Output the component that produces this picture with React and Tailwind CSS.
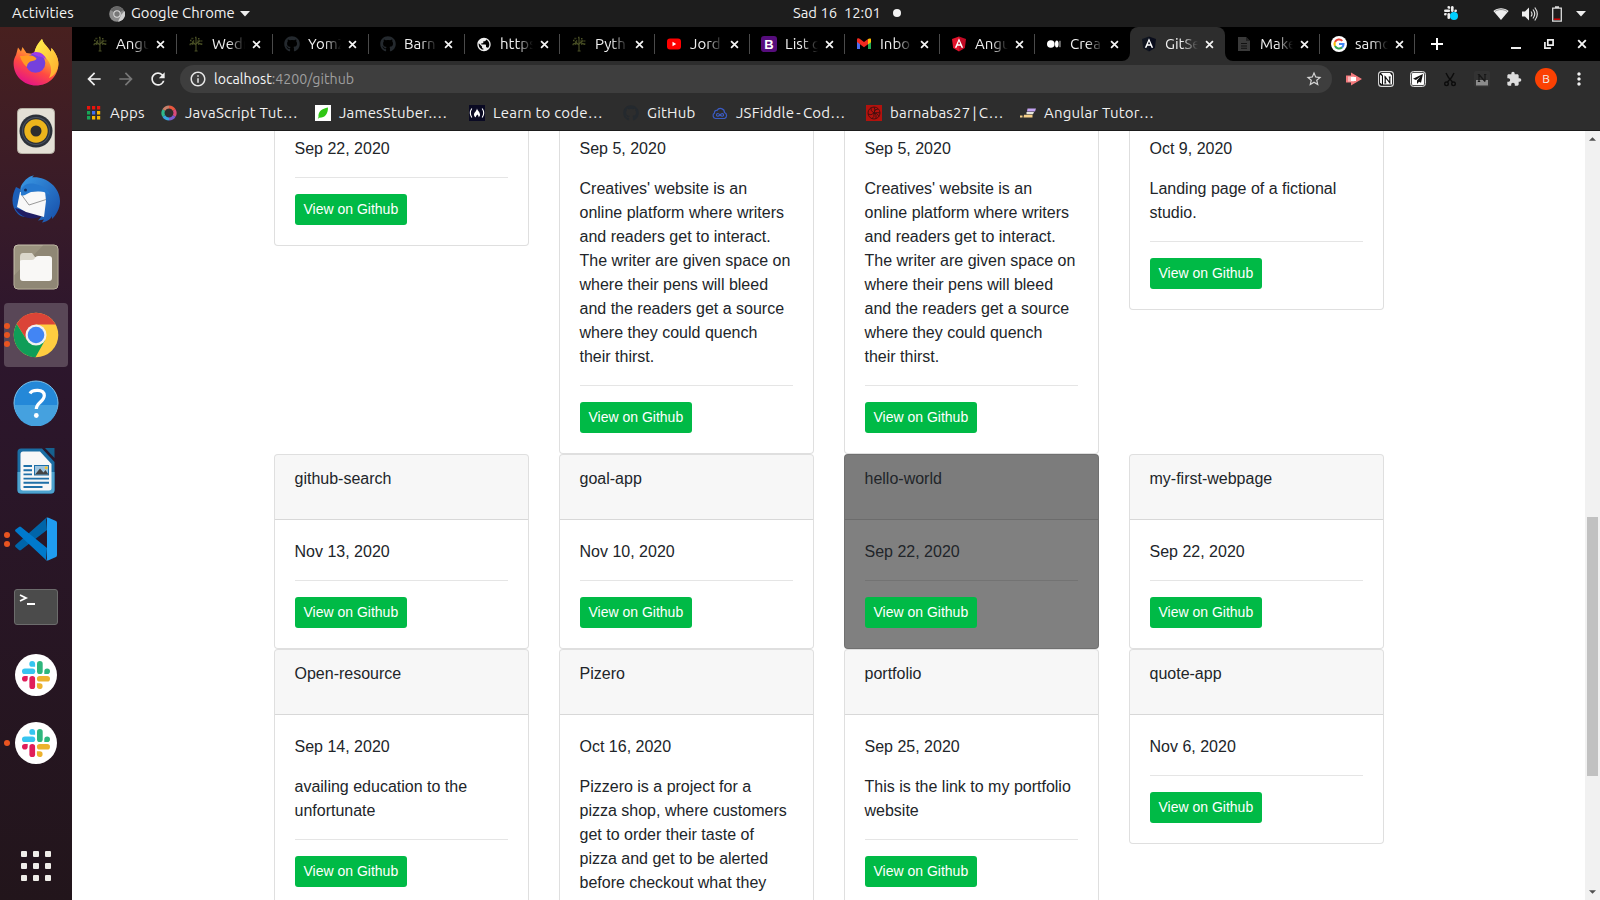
import React from "react";
import { FaGithub } from "react-icons/fa";
import {
  MdArrowBack,
  MdArrowForward,
  MdRefresh,
  MdInfoOutline,
  MdStarBorder,
  MdExtension,
  MdMoreVert,
  MdPublic,
} from "react-icons/md";

const UI = "font-['Ubuntu','Noto_Sans',sans-serif]";

/* ---------- small shared glyphs ---------- */

function Cross({ className = "" }) {
  return (
    <svg viewBox="0 0 10 10" className={className} fill="none" stroke="#f5f5f5" strokeWidth="1.9">
      <path d="M1.2 1.2 8.8 8.8M8.8 1.2 1.2 8.8" />
    </svg>
  );
}

function Tree() {
  return (
    <svg viewBox="0 0 16 16" className="size-4" fill="none" stroke="#4b5126" strokeWidth="1.1">
      <path d="M8 15V7M6.6 15h3M8 9 4 5.5M8 8l4-3.5M8 7V2M5.5 7 2 8M10.5 7l3.5 1.5" />
      <path
        d="M2 4.5h2M3.5 2.5h2M7 1.5h2M10 2.8h2M12.5 5h2M1.5 8.5h2M5 5h1.5M9.5 5h1.5M12.5 8h2M4 8h2M10 8h2"
        strokeWidth="1.5"
        strokeDasharray="1.2 .5"
      />
    </svg>
  );
}

function Shield({ left, right }) {
  return (
    <svg viewBox="0 0 16 16" className="size-4">
      <path d="M8 .5 1 3l1.1 9L8 15.5Z" fill={left} />
      <path d="M8 .5 15 3l-1.1 9L8 15.5Z" fill={right} />
      <path d="M8 2.2 3.8 11.8h1.7l.9-2.1h3.3l.8 2.1h1.7Zm0 3.1 1.2 3H6.9Z" fill="#fff" />
    </svg>
  );
}

function YouTube() {
  return (
    <svg viewBox="0 0 16 16" className="size-4">
      <rect x="1" y="2.5" width="14" height="11" rx="3" fill="#f00" />
      <path d="M6.5 5.7v4.6L10.2 8Z" fill="#fff" />
    </svg>
  );
}

function Bootstrap() {
  return (
    <span className="flex size-4 items-center justify-center rounded-[3px] bg-[#560d7c] font-['Liberation_Sans',sans-serif] text-[13px] leading-none font-bold text-white">
      B
    </span>
  );
}

function Gmail() {
  return (
    <svg viewBox="0 0 16 16" className="size-4">
      <path d="M1 5v8h3V7Z" fill="#4a6cf0" />
      <path d="M15 5v8h-3V7Z" fill="#20a853" />
      <path d="M12 4.4 15 2.6V6l-3 2.2Z" fill="#fbbc05" />
      <path d="M1 6V3.6C1 2 2.8 1.8 4 3l4 3 4-3v5.2l-4 3-4-3Z" fill="#f02a20" />
      <path d="M12 3c1.2-1 3-.8 3 .7V6l-3 2.2Z" fill="#fbbc05" />
    </svg>
  );
}

function Medium() {
  return (
    <svg viewBox="0 0 16 16" className="size-4" fill="#fff">
      <circle cx="4.8" cy="8" r="3.8" />
      <ellipse cx="10.8" cy="8" rx="1.8" ry="3.5" />
      <rect x="13.4" y="4.8" width="1.1" height="6.4" fill="#bbb" />
    </svg>
  );
}

function Sheet() {
  return (
    <svg viewBox="0 0 16 16" className="size-4">
      <path d="M2 1h8l4 4v10H2Z" fill="#3a3a3a" />
      <path d="M10 1v4h4" fill="#222" />
      <path d="M5 7.5h6M5 10h6M5 12.2h6" stroke="#111" strokeWidth="1.1" />
    </svg>
  );
}

function Google() {
  return (
    <svg viewBox="0 0 16 16" className="size-4" fill="none" strokeWidth="2.1">
      <circle cx="8" cy="8" r="8" fill="#fff" />
      <path d="M11.3 4.9A4.5 4.5 0 0 0 4 6" stroke="#ea4335" />
      <path d="M4 6a4.5 4.5 0 0 0 0 4.1" stroke="#fbbc05" />
      <path d="M4 10.1a4.5 4.5 0 0 0 7 1.3" stroke="#34a853" />
      <path d="M8 8h4.5a4.5 4.5 0 0 1-1.4 3.4" stroke="#4285f4" />
    </svg>
  );
}

/* ---------- desktop top bar ---------- */

function SlackMark({ className, mono }) {
  const c = mono ? ["#eee", "#eee", "#eee", "#eee"] : ["#36c5f0", "#2eb67d", "#ecb22e", "#e01e5a"];
  return (
    <svg viewBox="0 0 28 28" className={className}>
      <path d="M10.2 0a2.9 2.9 0 0 1 2.9 2.9v2.9h-2.9a2.9 2.9 0 0 1 0-5.8Z" fill={c[0]} />
      <rect x="0" y="7.4" width="13.2" height="5.7" rx="2.85" fill={c[0]} />
      <rect x="15" y="0" width="5.7" height="13.1" rx="2.85" fill={c[1]} />
      <path d="M22.3 13.1v-2.9a2.85 2.85 0 1 1 2.9 2.9Z" fill={c[1]} />
      <rect x="14.9" y="14.9" width="13.1" height="5.7" rx="2.85" fill={c[2]} />
      <path d="M14.9 22.3h2.9a2.85 2.85 0 1 1-2.9 2.9Z" fill={c[2]} />
      <rect x="7.4" y="14.9" width="5.7" height="13.1" rx="2.85" fill={c[3]} />
      <path d="M5.7 14.9v2.9a2.85 2.85 0 1 1-2.9-2.9Z" fill={c[3]} />
    </svg>
  );
}

function TopBar() {
  return (
    <header
      className={`${UI} grid h-[27px] shrink-0 grid-cols-[793px_1fr_auto] items-center bg-[#1d1d1d] text-[14.8px] leading-none text-[#f2f2f2]`}
    >
      <div className="flex items-center pl-3">
        <span className="w-[97px] tracking-[0.12px]">Activities</span>
        <svg viewBox="0 0 16 16" className="size-4">
          <circle cx="8" cy="8" r="7.8" fill="#8b8b8b" />
          <path d="M8 8 1.5 4A7.8 7.8 0 0 1 14.6 4Z" fill="#666" />
          <path d="M9 15.7 12 9l3.6-4A7.8 7.8 0 0 1 9 15.7Z" fill="#d0d0d0" />
          <circle cx="8" cy="8" r="3.7" fill="#ddd" />
          <circle cx="8" cy="8" r="2.7" fill="#777" />
        </svg>
        <span className="ml-1.5 w-[104px] whitespace-nowrap">Google Chrome</span>
        <svg viewBox="0 0 10 6" className="ml-[5px] h-[6px] w-[10px]" fill="#eee">
          <path d="M0 0h10L5 5.6Z" />
        </svg>
      </div>
      <div className="flex items-center">
        <span className="w-[100px] whitespace-pre">Sad 16  12:01</span>
        <span className="size-2 rounded-full bg-[#f2f2f2]" />
      </div>
      <div className="flex items-center pr-[14px]">
        <span className="relative mr-[34px] block size-[15px]">
          <SlackMark className="size-[13px]" mono />
          <span className="absolute top-[6px] left-[6px] size-2 rounded-full bg-[#00cfff]" />
        </span>
        <svg viewBox="0 0 16 14" className="mr-[13px] h-[14px] w-4">
          <path d="M8 13 .4 4C4.8 .2 11.2 .2 15.6 4Z" fill="#eee" />
          <path d="M2 4.4C5.5 2 10.5 2 14 4.4" stroke="#777" fill="none" strokeWidth=".8" />
        </svg>
        <svg viewBox="0 0 16 16" className="mr-[14px] size-4" fill="none" stroke="#ddd" strokeWidth="1.2">
          <path d="M0 5.500h3L7 1.500v13l-4-4H0Z" fill="#eee" stroke="none" />
          <path d="M9 5.500q2 2.500 0 5M11 3.500q3.400 4.500 0 9M12.800 1.500q5 6.500 0 13" />
        </svg>
        <svg viewBox="0 0 10 16" className="mr-[14px] h-4 w-[10px]" fill="none">
          <path d="M3 1h4M.7 2.200h8.600v13H.7Z" stroke="#ddd" strokeWidth="1.3" />
          <path d="M2 13.200h6" stroke="#d00" strokeWidth="1.4" />
        </svg>
        <svg viewBox="0 0 10 6" className="h-[6px] w-[10px]" fill="#eee">
          <path d="M0 0h10L5 5.600Z" />
        </svg>
      </div>
    </header>
  );
}

/* ---------- dock ---------- */

function Firefox() {
  return (
    <svg viewBox="0 0 46 48" className="-mt-[2px] h-[48px] w-[46px]">
      <defs>
        <linearGradient id="ff" x1=".8" y1="0" x2=".3" y2="1">
          <stop offset="0" stopColor="#fff44f" />
          <stop offset=".35" stopColor="#ffa930" />
          <stop offset=".65" stopColor="#ff4a42" />
          <stop offset="1" stopColor="#e3108b" />
        </linearGradient>
        <linearGradient id="ffy" x1="0" y1="0" x2="1" y2="1">
          <stop offset="0" stopColor="#fff44f" />
          <stop offset="1" stopColor="#ffa92c" />
        </linearGradient>
      </defs>
      <path
        d="M3 17 5 9.500l3 4L9.500 9l4 6 7.500 1c1-6 4-11 8-15 1 4 4 6 6 9l3 4 .5-4C43 15 45.500 21 45.400 26 45 39 35 47.500 23 47.500S.6 38 .6 25.500C.6 22 1.500 19.500 3 17Z"
        fill="url(#ff)"
      />
      <path
        d="M29 1c1 4 4 6 6 9l3 4 .5-4C43 15 45.500 21 45.400 26c-.2 6-4 12-9.400 14 4-7 2-15-3-20-4-4-9-4-12-4 1-6 4-11 8-15Z"
        fill="url(#ffy)"
      />
      <circle cx="22.5" cy="25" r="9.8" fill="#7540dd" />
      <path d="M18 15.500c6-4 14 0 15.500 6.500-3-3.500-6-3-8-3.500Z" fill="#a13ce8" />
      <path d="M7 18c5 0 9-1 13 0 2 .8 3.500 2 3.500 2.800-1 2.200-5 2.200-7 3.200-2 1.500-2.500 3-2.500 5-3-2-6-7-7-11Z" fill="#ff9a24" />
    </svg>
  );
}

function Rhythmbox() {
  return (
    <svg viewBox="0 0 38 46" className="h-[46px] w-[38px]">
      <rect x=".5" y=".5" width="37" height="45" rx="4" fill="#e4e0d6" stroke="#b5b0a5" />
      <circle cx="19" cy="23" r="16.5" fill="#2c3139" />
      <circle cx="19" cy="23" r="14" fill="#4a5260" />
      <circle cx="19" cy="23" r="13" fill="#2c3139" />
      <circle cx="19" cy="23" r="11.7" fill="#edb51c" />
      <circle cx="19" cy="23" r="5.5" fill="#2e2e2e" />
    </svg>
  );
}

function Thunderbird() {
  return (
    <svg viewBox="0 0 48 48" className="size-12">
      <defs>
        <linearGradient id="tb" x1="0" y1="0" x2="1" y2="1">
          <stop offset="0" stopColor="#3a9ae6" />
          <stop offset="1" stopColor="#164da8" />
        </linearGradient>
      </defs>
      <path d="M4 12C-1 22-1 32 6 39c2 2 5 3 8 3L8 14Z" fill="#1c5fb9" />
      <path
        d="M9 11C13 4 18 .5 22 .5l-2 1.800C34 1 48 12 48 26c0 8-4 14-8 18l0-3c-2 4-6 6-10 6.500l2-3-6 1C36 36 34 20 25 17c-5-1.500-10 0-16 4-1-4-1-7 0-10Z"
        fill="url(#tb)"
      />
      <path d="m3 33 10 3 17 5c-9 5-22 2-27-8Z" fill="#201d63" />
      <path d="M8 17 33 16l1 10-2 16-18-5-9-5Z" fill="#f8f8f8" />
      <path d="m9 19 8 11 17-5.500" fill="none" stroke="#999" strokeWidth="1" />
      <path d="M9 20c-1-8 5-13 14-11 8 2 13 5 15 11-7-5-14-4-19-3-4 1-6 5-10 3Z" fill="#2679cf" />
      <circle cx="13.5" cy="15" r="1.5" fill="#153263" />
    </svg>
  );
}

function Files() {
  return (
    <svg viewBox="0 0 46 46" className="size-[46px]">
      <rect x="1" y="1" width="44" height="44" rx="4" fill="#9b937f" stroke="#c8c1ad" />
      <path d="M30 1.500h11q3.500 0 3.500 3.500v36q0 3.500-3.500 3.500H5q-3.500 0-3.500-3.500V31Z" fill="#8f8775" />
      <path d="M7 13q0-4 3-4h9l3 4h14q3 0 3 3v4H7Z" fill="#dbd7cb" />
      <path d="M7 17q0-1 3-1h9q2 0 3-2 1-2 3-2h11q3 0 3 3v19q0 3-3 3H10q-3 0-3-3Z" fill="#f9f8f6" />
    </svg>
  );
}

function Chrome() {
  return (
    <svg viewBox="0 0 46 46" className="size-[46px]">
      <circle cx="23" cy="23" r="22.3" fill="#ffcd40" />
      <path d="M23 12.500 13.900 28.250 3.700 11.900A22.300 22.300 0 0 1 23 .7a22.300 22.300 0 0 1 19.700 11.800Z" fill="#db4437" />
      <path d="M3.700 11.900 13.900 28.250 32 28.250 22.500 45.300A22.300 22.300 0 0 1 3.700 11.900Z" fill="#0f9d58" />
      <circle cx="23" cy="23" r="10.5" fill="#f1f1f1" />
      <circle cx="23" cy="23" r="8.3" fill="#4285f4" />
    </svg>
  );
}

function Help() {
  return (
    <svg viewBox="0 0 46 46" className="size-[46px]">
      <circle cx="23" cy="23" r="22" fill="#2488d8" stroke="#7cc4ee" />
      <path d="M1.500 25h43a21.500 21.500 0 0 1-43 0Z" fill="#45a1df" />
      <path d="M17 13.500c2-4 14-5 14.300 2 0 6-8 7-8 13.500" fill="none" stroke="#fff" strokeWidth="3.2" />
      <circle cx="23.3" cy="35.5" r="2.4" fill="#fff" />
    </svg>
  );
}

function Writer() {
  return (
    <svg viewBox="0 0 38 46" className="h-[46px] w-[38px]">
      <path d="M4 .5h21L37.500 14v28q0 3.500-3.500 3.500H4Q.5 45.500.5 42V4Q.5.5 4 .5Z" fill="#1a6da3" />
      <path d="M.5 24h37v18q0 3.500-3.500 3.500H4Q.5 45.500.5 42Z" fill="#4da3cf" />
      <path d="M6 3.500h17L34.500 16v24q0 2.500-2.500 2.500H6q-2.500 0-2.500-2.500V6Q3.500 3.500 6 3.500Z" fill="#f7f7f7" />
      <path d="M28 0h9.500v10Z" fill="#16618f" />
      <path d="M6.500 18h8.500M6.500 22.200h8.500M6.500 26.400h8.500M6.500 30.600H32M6.500 34.800H32M6.500 39h19" stroke="#1f70a8" strokeWidth="1.9" />
      <rect x="17.5" y="17.5" width="14" height="9.5" fill="#9ec4de" stroke="#1f70a8" />
      <path d="m18 26.500 5-6 3.500 4 2-2.500 3 4.500Z" fill="#444" />
      <circle cx="29.2" cy="19.8" r="1.5" fill="#f2c230" />
    </svg>
  );
}

function VSCode() {
  return (
    <svg viewBox="0 0 44 44" className="size-11">
      <path d="M32 1 1.500 28q-1 1 0 2l3.500 3q1 .8 2 0L33 13Z" fill="#0065a9" />
      <path d="M32 43 1.500 14.500q-1-1 0-2L5 10q1-.8 2 0l26 21Z" fill="#007acc" />
      <path d="M32 1q1-1 2.500-.2L42 4q1 .5 1 2v32q0 1.500-1 2l-7.500 3.300q-1.500.7-2.500-.3 1 .3 1-2V3q0-2.300-1-2Z" fill="#1f9cf0" />
    </svg>
  );
}

function Terminal() {
  return (
    <div className="flex h-[36px] w-[44px] rounded-[3px] border border-[#6c6c6c] bg-[#4b4b4b]">
      <svg viewBox="0 0 42 34" className="w-full" fill="none" stroke="#fff" strokeWidth="1.8">
        <path d="m5 5 6 3-6 3M12 14h8" />
      </svg>
    </div>
  );
}

function Slack() {
  return (
    <div className="flex size-[42px] items-center justify-center rounded-full bg-white">
      <SlackMark className="size-7" />
    </div>
  );
}

const dock = [
  { icon: Firefox, dots: [] },
  { icon: Rhythmbox, dots: [] },
  { icon: Thunderbird, dots: [] },
  { icon: Files, dots: [] },
  { icon: Chrome, dots: [1, 2, 3], active: true },
  { icon: Help, dots: [] },
  { icon: Writer, dots: [] },
  { icon: VSCode, dots: [1, 2] },
  { icon: Terminal, dots: [] },
  { icon: Slack, dots: [] },
  { icon: Slack, dots: [1] },
];

function Dock() {
  return (
    <aside className="flex w-[72px] shrink-0 flex-col bg-linear-to-b from-[#48201f] via-[#2d162d] via-35% to-[#22151b] pt-0.5">
      {dock.map(({ icon: Icon, dots, active }, i) => (
        <div key={i} className="relative flex h-[68px] items-center justify-center px-1">
          <div
            className={
              active
                ? "flex size-16 items-center justify-center rounded-[4px] bg-[#594757]"
                : "flex size-16 items-center justify-center"
            }
          >
            <Icon />
          </div>
          <div className="absolute inset-y-0 left-1 flex flex-col justify-center gap-[3px]">
            {dots.map((d) => (
              <span key={d} className="size-[6px] rounded-full bg-[#e95420]" />
            ))}
          </div>
        </div>
      ))}
      <div className="mx-auto mt-auto mb-[19px] grid grid-cols-3 gap-1.5">
        {Array.from({ length: 9 }, (_, i) => (
          <span key={i} className="size-[6px] rounded-[1px] bg-[#f0eee9]" />
        ))}
      </div>
    </aside>
  );
}

/* ---------- browser chrome ---------- */

const tabs = [
  { title: "Angu", icon: <Tree />, wide: true, sep: true },
  { title: "Wedn", icon: <Tree />, wide: true, sep: true },
  { title: "YomZ", icon: <FaGithub className="size-4 text-[#24292e]" />, wide: true, sep: true },
  { title: "Barn", icon: <FaGithub className="size-4 text-[#24292e]" />, wide: true, sep: true },
  { title: "https", icon: <MdPublic className="size-[17px] text-[#eee]" />, sep: true },
  { title: "Pyth", icon: <Tree />, sep: true },
  { title: "Jord", icon: <YouTube />, sep: true },
  { title: "List g", icon: <Bootstrap />, sep: true },
  { title: "Inbo", icon: <Gmail />, sep: true },
  { title: "Angu", icon: <Shield left="#e3132c" right="#c10a25" />, sep: true },
  { title: "Crea", icon: <Medium /> },
  { title: "GitSe", icon: <Shield left="#101520" right="#0a0d1c" />, active: true },
  { title: "Make", icon: <Sheet />, sep: true },
  { title: "samo", icon: <Google />, sep: true },
];

function Flare({ flip }) {
  return (
    <svg
      viewBox="0 0 8 8"
      className={flip ? "absolute -right-2 bottom-0 size-2 -scale-x-100" : "absolute bottom-0 -left-2 size-2"}
      fill="#2d2d2d"
    >
      <path d="M8 0v8H0A8 8 0 0 0 8 0Z" />
    </svg>
  );
}

function Tab({ title, icon, wide, sep, active }) {
  return (
    <div
      className={`relative flex h-[34px] shrink-0 items-center ${wide ? "w-24" : "w-[95px]"} ${
        active ? "rounded-t-lg bg-[#2d2d2d]" : ""
      }`}
    >
      {active && <Flare />}
      {active && <Flare flip />}
      <span className="ml-[11px] flex w-4 shrink-0 justify-center">{icon}</span>
      <span className="ml-2 w-[33px] shrink-0 overflow-hidden mask-r-from-50% mask-r-to-100% text-[15px] leading-5 whitespace-nowrap text-[#f0f0f0]">
        {title}
      </span>
      <Cross className="ml-[7px] size-[9px] shrink-0" />
      {sep && <span className="ml-auto h-5 w-px bg-[#4a4a4a]" />}
    </div>
  );
}

function TabStrip() {
  return (
    <div className={`${UI} flex h-[34px] items-center bg-black pl-[9px] leading-none`}>
      {tabs.map((t, i) => (
        <Tab key={i} {...t} />
      ))}
      <svg viewBox="0 0 12 12" className="ml-4 size-3" stroke="#fff" strokeWidth="2">
        <path d="M6 0v12M0 6h12" />
      </svg>
      <div className="ml-auto flex items-center gap-[22px] pr-[13px]">
        <svg viewBox="0 0 10 10" className="mr-px size-[10px]" fill="#eee">
          <path d="M0 8h10v2H0Z" />
        </svg>
        <svg viewBox="0 0 10 10" className="mr-px size-[10px]" fill="none" stroke="#eee" strokeWidth="1.7">
          <path d="M3.800.9h5.300v5.300H3.800ZM.9 3v6.100h6" />
        </svg>
        <Cross className="size-[10px]" />
      </div>
    </div>
  );
}

function Extensions() {
  return (
    <div className="ml-[14px] flex items-center gap-4">
      <svg viewBox="0 0 16 16" className="size-4">
        <path d="M0 4.500h5V1.500L16 8 5 14.500v-3H0Z" fill="#f47a7d" />
        <path d="M2 5.500h6v5H2Z" fill="#fbb6b8" />
        <path d="M5 6h5v4H5Z" fill="#fff" />
      </svg>
      <svg viewBox="0 0 16 16" className="size-4">
        <rect x=".6" y=".6" width="14.8" height="14.8" rx="3" fill="#0c0c0c" stroke="#ddd" strokeWidth="1.1" />
        <path d="M2 3.500 4 5v8.500L2 11.500Z" fill="#eee" />
        <path d="M3 2h9l2 2.500v9H5V4.500Z" fill="#fff" />
        <path d="M7.200 12V6l4.600 5.800V6M6.300 6h1.800M10.700 6h2M6.300 12h2" fill="none" stroke="#111" strokeWidth="1.2" />
      </svg>
      <svg viewBox="0 0 16 16" className="size-4">
        <rect x=".5" y=".5" width="15" height="15" rx="3" fill="#555" stroke="#ddd" />
        <rect x="2" y="2" width="12" height="12" rx="1" fill="#fff" />
        <path d="M13 3 3 7.800l3 1.200 4.600-3.500L7 9.500V13l2-2.300 2 1Z" fill="#111" />
      </svg>
      <svg viewBox="0 0 16 16" className="size-4" fill="none" stroke="#0c0c0c" strokeWidth="1.4">
        <path d="M4 2q2 5 6.500 9M12 2q-2 5-6.500 9" />
        <circle cx="4.5" cy="12.8" r="1.8" />
        <circle cx="11.5" cy="12.8" r="1.8" />
      </svg>
      <svg viewBox="0 0 16 16" className="size-4">
        <rect x="0" y="0" width="16" height="16" rx="2" fill="#333" />
        <path d="M2 9h12v5.500H2Z" fill="#8b8b8b" />
        <path d="M5 3.500v7M5 3.500l6 7M11 3.500v7M3.800 3.500h2M10 3.500h2.300M3.800 10.500h2.400" stroke="#181818" strokeWidth="1.2" />
      </svg>
      <MdExtension className="size-4 text-[#dedede]" />
    </div>
  );
}

function Toolbar() {
  return (
    <div className={`${UI} flex h-9 items-center bg-[#2d2d2d] pl-3 leading-none text-[#f0f0f0]`}>
      <MdArrowBack className="size-5" />
      <MdArrowForward className="ml-3 size-5 text-[#777]" />
      <MdRefresh className="ml-3 size-5" />
      <div className="ml-3 flex h-7 w-[1152px] items-center rounded-full bg-[#3e3e3e] px-[9px]">
        <MdInfoOutline className="size-[18px] text-[#e6e6e6]" />
        <span className="ml-[7px] text-[14.2px] text-[#f5f5f5]">
          localhost<span className="text-[#9f9f9f]">:4200/github</span>
        </span>
        <MdStarBorder className="ml-auto size-[18px] text-[#d5d5d5]" />
      </div>
      <Extensions />
      <span className="ml-[13px] flex size-[22px] items-center justify-center rounded-full bg-[#fb4103] text-[12px]">
        B
      </span>
      <MdMoreVert className="ml-3 size-5" />
    </div>
  );
}

const appColors = ["#e8140c", "#e8140c", "#e8140c", "#17a757", "#3d6df0", "#f5b700", "#17a757", "#f5b700", "#f5b700"];

function AppsIcon() {
  return (
    <svg viewBox="0 0 14 14" className="size-[14px]">
      {appColors.map((c, i) => (
        <rect key={i} x={(i % 3) * 5} y={Math.floor(i / 3) * 5} width="3.2" height="3.5" fill={c} />
      ))}
    </svg>
  );
}

function Swirl() {
  return (
    <svg viewBox="0 0 16 16" className="size-4" fill="none" strokeWidth="3.2">
      <path d="M8 2a6 6 0 0 1 5.200 3" stroke="#e9573f" />
      <path d="M13.200 5a6 6 0 0 1 0 6" stroke="#d84a7a" />
      <path d="M13.200 11A6 6 0 0 1 8 14" stroke="#7b5bd0" />
      <path d="M8 14a6 6 0 0 1-5.200-3" stroke="#38a5e0" />
      <path d="M2.800 11a6 6 0 0 1 0-6" stroke="#2fb88c" />
      <path d="M2.800 5A6 6 0 0 1 8 2" stroke="#c9806a" />
    </svg>
  );
}

function Leaf() {
  return (
    <svg viewBox="0 0 16 16" className="size-4">
      <path d="M0 0h16v16H0Z" fill="#fff" />
      <path d="M13 2.500C7 4 3 6 3.500 12L2.800 14l1.400-1.200C10 13 13 9 13 2.500Z" fill="#2fc614" />
    </svg>
  );
}

function FreeCode() {
  return (
    <svg viewBox="0 0 16 16" className="size-4" fill="none" stroke="#fff" strokeWidth="1.1">
      <path d="M0 0h16v16H0Z" fill="#0a0a23" stroke="none" />
      <path d="M2.800 3.500q-3 4.500 0 9M13.200 3.500q3 4.500 0 9" />
      <path d="M8 3.200c0 2 3.200 3.500 3 6.800-.2 1.500-1 2-1.500 2.300.5-1.500-.5-2-1.200-2.800-.5 1-1.800 1.300-1.300 2.800C5.500 12 5 11 5 9.500c0-2 2.500-3 3-6.300Z" fill="#fff" stroke="none" />
    </svg>
  );
}

function Fiddle() {
  return (
    <svg viewBox="0 0 16 16" className="size-4" fill="none" stroke="#3b5bc4" strokeWidth="1.2">
      <path d="M3.500 13.500a3 3 0 0 1-1-5.500 2 2 0 0 1 2.500-2.500 4 4 0 0 1 7.500 2 3.200 3.200 0 0 1 0 6Z" />
      <path d="M8 9.900C6.500 8 4.500 8 4.500 9.900s2 1.700 3.500 0 3.500-1.900 3.500 0-2 1.700-3.500 0Z" />
    </svg>
  );
}

function Codewars() {
  return (
    <svg viewBox="0 0 16 16" className="size-4" fill="none" stroke="#3d1010" strokeWidth=".9">
      <path d="M0 0h16v16H0Z" fill="#b3120d" stroke="none" />
      <circle cx="8" cy="8" r="6" />
      <path d="M8 8q0-4 4-4M8 8q4 0 5 3.500M8 8q1 4-2.500 6M8 8q-3 3-6 1M8 8Q4 6 5 2.500M8 8q2-3 0-6M8 8q4-1 6 0M8 8q3 2 2 5.500" />
    </svg>
  );
}

function Steps() {
  return (
    <svg viewBox="0 0 16 16" className="size-4">
      <path d="M7.500 3.500H16L15 6.500H7Z" fill="#c3a3f2" />
      <path d="M6.500 7H14l-1 2.200H6.500Z" fill="#e6e6dc" />
      <path d="M4 9.700h8.500V12.500H3.500ZM0 10.500h2.500v2H0Z" fill="#f5cf8a" />
    </svg>
  );
}

const bookmarks = [
  { label: "JavaScript Tut…", icon: <Swirl /> },
  { label: "JamesStuber.…", icon: <Leaf /> },
  { label: "Learn to code…", icon: <FreeCode /> },
  { label: "GitHub", icon: <FaGithub className="size-4 text-[#24292e]" />, short: true },
  { label: "JSFiddle - Cod…", icon: <Fiddle />, tight: true },
  { label: "barnabas27 | C…", icon: <Codewars />, tight: true },
  { label: "Angular Tutor…", icon: <Steps /> },
];

function BookmarksBar() {
  return (
    <div
      className={`${UI} flex h-[34px] items-center border-b border-[#1b1b1b] bg-[#2d2d2d] pb-[2px] pl-[15px] text-[15px] leading-none tracking-[0.2px] whitespace-nowrap text-[#f0f0f0]`}
    >
      <div className="flex w-[74px] shrink-0 items-center gap-[9px]">
        <AppsIcon />
        Apps
      </div>
      {bookmarks.map((b) => (
        <div key={b.label} className={`flex shrink-0 items-center gap-2 ${b.short ? "w-[89px]" : "w-[154px]"}`}>
          {b.icon}
          <span className={b.tight ? "[word-spacing:-1.5px]" : ""}>{b.label}</span>
        </div>
      ))}
    </div>
  );
}

/* ---------- page ---------- */

const creatives =
  "Creatives' website is an online platform where writers and readers get to interact. The writer are given space on where their pens will bleed and the readers get a source where they could quench their thirst.";

const rows = [
  [
    { date: "Sep 22, 2020" },
    { date: "Sep 5, 2020", text: creatives },
    { date: "Sep 5, 2020", text: creatives },
    { date: "Oct 9, 2020", text: "Landing page of a fictional studio." },
  ],
  [
    { name: "github-search", date: "Nov 13, 2020" },
    { name: "goal-app", date: "Nov 10, 2020" },
    { name: "hello-world", date: "Sep 22, 2020", hovered: true },
    { name: "my-first-webpage", date: "Sep 22, 2020" },
  ],
  [
    { name: "Open-resource", date: "Sep 14, 2020", text: "availing education to the unfortunate" },
    {
      name: "Pizero",
      date: "Oct 16, 2020",
      text: "Pizzero is a project for a pizza shop, where customers get to order their taste of pizza and get to be alerted before checkout what they",
    },
    { name: "portfolio", date: "Sep 25, 2020", text: "This is the link to my portfolio website" },
    { name: "quote-app", date: "Nov 6, 2020" },
  ],
];

function RepoCard({ name, date, text, hovered }) {
  return (
    <article
      className={`border border-[rgba(0,0,0,0.125)] ${name ? "rounded" : "rounded-b border-t-0"} ${
        hovered ? "bg-[#808080]" : "bg-white"
      }`}
    >
      {name && (
        <h2 className="h-[65px] rounded-t-[3px] border-b border-[rgba(0,0,0,0.125)] bg-black/3 px-5 py-3">{name}</h2>
      )}
      <div className={name ? "p-5" : "px-5 pt-[6px] pb-5"}>
        <p className="mb-4">{date}</p>
        {text && <p className="mb-4">{text}</p>}
        <hr className="mb-4 border-black/10" />
        <button className="block h-[31px] rounded-[3px] bg-[#00ba46] px-[9px] text-[14px] leading-[21px] text-white">
          View on Github
        </button>
      </div>
    </article>
  );
}

function Page() {
  return (
    <div className="flex min-h-0 flex-1 bg-white">
      <main className="flex-1 overflow-hidden font-['Liberation_Sans',Arial,sans-serif] text-base leading-6 text-[#212529]">
        <div className="mx-auto w-[1140px] px-[15px]">
          {rows.map((row, i) => (
            <div key={i} className="grid grid-cols-[repeat(4,255px)] items-start gap-x-[30px]">
              {row.map((card, j) => (
                <RepoCard key={j} {...card} />
              ))}
            </div>
          ))}
        </div>
      </main>
      <div className="flex w-[15px] shrink-0 flex-col items-center bg-[#f1f1f1]">
        <svg viewBox="0 0 8 4" className="mt-[6px] h-1 w-[7px]" fill="#505050">
          <path d="M4 0 8 4H0Z" />
        </svg>
        <div className="mt-[376px] h-[259px] w-[11px] bg-[#c1c1c1]" />
        <svg viewBox="0 0 8 4" className="mt-auto mb-[6px] h-1 w-[7px]" fill="#505050">
          <path d="M4 4 8 0H0Z" />
        </svg>
      </div>
    </div>
  );
}

export default function App() {
  return (
    <div className="flex h-[900px] w-[1600px] flex-col overflow-hidden">
      <TopBar />
      <div className="flex min-h-0 flex-1">
        <Dock />
        <div className="flex min-w-0 flex-1 flex-col">
          <TabStrip />
          <Toolbar />
          <BookmarksBar />
          <Page />
        </div>
      </div>
    </div>
  );
}
